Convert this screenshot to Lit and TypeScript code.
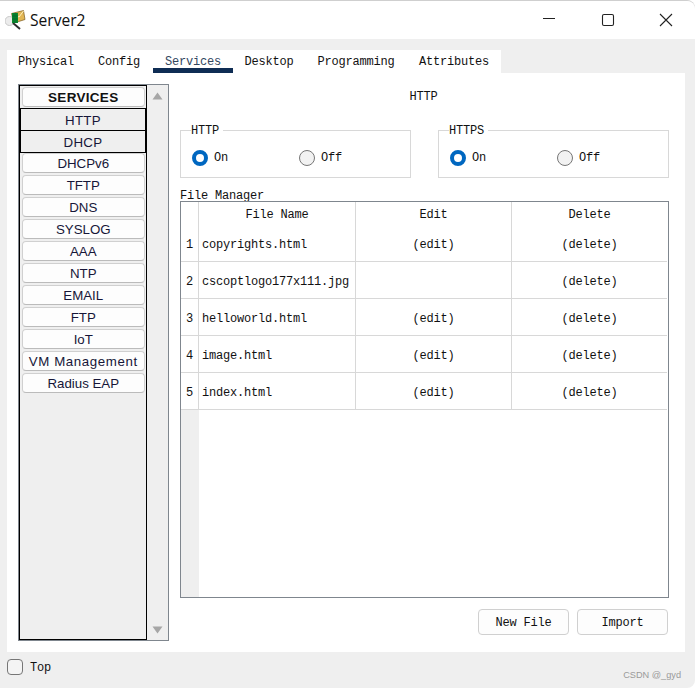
import { LitElement, html, css, svg } from "lit";
import { customElement } from "lit/decorators.js";

const SERVICES = ["DHCPv6","TFTP","DNS","SYSLOG","AAA","NTP","EMAIL","FTP","IoT","VM Management","Radius EAP"];
const TABS = ["Physical","Config","Services","Desktop","Programming","Attributes"];
const FILES = [
  ["copyrights.html", true],
  ["cscoptlogo177x111.jpg", false],
  ["helloworld.html", true],
  ["image.html", true],
  ["index.html", true],
] as const;

const appIcon = svg`<svg class="appicon" width="22" height="22" viewBox="0 0 22 22">
  <circle cx="4.500" cy="12" r="4.500" fill="#ececec" stroke="#c8c8c8"/>
  <path d="M8 14l7 6" stroke="#2c2c2c" stroke-width="2" fill="none"/>
  <path d="M6.500 4.500L18.500 1.500 20 10.500 9 14z" fill="#e2b654" stroke="#7a5a20" stroke-width=".7"/>
  <path d="M8 4.500l6 3.500 4.500-6" fill="none" stroke="#fff2c0"/>
  <rect x="7" y="4" width="6" height="10" fill="#0d8a2c"/>
  <path d="M9 4v10M11 4v10M7 7h6M7 10h6" stroke="#063" stroke-width=".7"/>
</svg>`;

@customElement("app-root")
export class AppRoot extends LitElement {
  static styles = css`
    :host {
      display: block; width: 695px; height: 688px; overflow: hidden; background: #fff;
      font-family: "Liberation Mono", monospace; font-size: 12px; letter-spacing: -0.2px; color: #111;
    }
    .window {
      box-sizing: border-box; width: 695px; height: 688px; display: flex; flex-direction: column;
      background: #efefef; border-top: 1px solid #cfcfcf; border-radius: 0 8px 8px 0;
    }
    .title {
      height: 38px; background: #fff; display: flex; align-items: center; flex: none;
      border-radius: 0 8px 0 0;
    }
    .appicon { margin: 0 3px 0 5px; flex: none; }
    .title-text { font: 15.600px "Open Sans", "Noto Sans", sans-serif; letter-spacing: 0; color: #111; flex: 1; }
    .winbtns { display: flex; align-items: center; }
    .winbtn { width: 59px; height: 38px; display: flex; align-items: center; justify-content: center; }
    .winbtn:last-child { width: 58px; }
    .body { padding: 11px 10px 0 7px; flex: 1; display: flex; flex-direction: column; }
    .tabs { display: flex; width: 494px; height: 23px; background: #fff; flex: none; }
    .tab { position: relative; height: 23px; line-height: 24px; text-align: center; flex: none; }
    .tab.on { color: #33475f; }
    .tab.on::after { content: ""; position: absolute; left: 0; right: 0; bottom: 0; height: 5px; background: #0f2d54; }
    .panel {
      background: #fff; height: 579px; flex: none; box-sizing: border-box; padding: 11px 16px 0 11px;
      display: flex; gap: 11px;
    }
    .listbox {
      width: 151px; height: 557px; flex: none; box-sizing: border-box; border: 1px solid #7f868e;
      display: flex; background: #efefef;
    }
    .list {
      width: 128px; box-sizing: border-box; border: 1px solid #000;
      padding: 1px 0 0; display: flex; flex-direction: column; flex: none;
    }
    .svc {
      box-sizing: border-box; height: 20px; margin: 0 1px 2px 1.500px; background: #fdfdfd; border: 1px solid #d0d0d0; border-radius: 4px;
      border-bottom-color: #bbb;
      font: 13.300px/19px "Liberation Sans", Arial, sans-serif; letter-spacing: 0; text-align: center; color: #161638;
      flex: none;
    }
    .svc.wide { letter-spacing: .6px; }
    .svc.head { font-weight: 700; font-size: 13.500px; letter-spacing: .3px; color: #111; margin-bottom: 1px; }
    .svc.sel {
      height: 23px; margin: 0 0 -1px 0; background: #efefef; border: 1px solid #000; border-radius: 0;
      line-height: 23px; letter-spacing: .3px;
    }
    .svc.sel + .svc:not(.sel) { margin-top: 1px; }
    .scroll { flex: 1; display: flex; flex-direction: column; justify-content: space-between; align-items: center; padding: 7px 1px 6px 0; box-sizing: border-box; }
    .right { flex: 1; min-width: 0; display: flex; flex-direction: column; }
    .heading { height: 24px; line-height: 26px; text-align: center; flex: none; padding-right: 2px; }
    .proto { display: flex; justify-content: space-between; margin-top: 15px; flex: none; height: 55px; }
    fieldset {
      width: 231px; height: 55px; box-sizing: border-box; margin: 0; padding: 0 0 0 11px;
      border: 1px solid #d8d8d8; display: flex;
    }
    legend { padding: 0 4px 0 0; margin-left: -1px; line-height: 16px; height: 14px; background: #fff; }
    .radios { display: flex; margin-top: 12px; }
    .radio { width: 107px; display: flex; align-items: center; gap: 6px; height: 18px; flex: none; }
    .dot { width: 16px; height: 16px; box-sizing: border-box; border-radius: 50%; flex: none; }
    .dot.on { border: 4.500px solid #0067c0; background: #fff; }
    .dot.off { border: 1px solid #767676; background: #f2f2f2; }
    .fm-label { margin-top: 10px; height: 13px; line-height: 16px; flex: none; }
    .table {
      height: 397px; box-sizing: border-box; border: 1px solid #7f868e; flex: none;
      display: grid; grid-template-columns: 17px 157px 156px 156px; grid-auto-rows: 37px;
      grid-template-rows: 23px; align-content: start;
      background: linear-gradient(to right, #efefef 18px, #fff 18px);
    }
    .cell {
      display: flex; align-items: center; justify-content: center; box-sizing: border-box;
      background: #fff; border-bottom: 1px solid #d8d8d8; border-left: 1px solid #d8d8d8; white-space: nowrap;
      padding-top: 3px;
    }
    .cell.num { border-left: none; border-bottom: 1px solid #d8d8d8; justify-content: center; }
    .cell.name { justify-content: flex-start; padding-left: 3px; }
    .cell.hd { border-bottom: none; padding-top: 2px; }
    .actions { display: flex; justify-content: flex-end; gap: 8px; margin-top: 11px; padding-right: 1px; flex: none; }
    .btn {
      width: 91px; height: 26px; box-sizing: border-box; background: #fdfdfd; border: 1px solid #d0d0d0; border-radius: 4px;
      display: flex; align-items: center; justify-content: center; font: inherit; letter-spacing: inherit; color: #111; padding: 2px 0 0;
    }
    .footer { flex: 1; display: flex; align-items: flex-start; position: relative; padding-top: 7px; }
    .check { width: 16px; height: 16px; box-sizing: border-box; border: 1px solid #767676; border-radius: 4px; background: #f4f4f4; flex: none; }
    .top { margin-left: 7px; line-height: 18px; }
    .wm { position: absolute; right: 4px; bottom: 8px; font: 9.200px "Liberation Sans", Arial, sans-serif; letter-spacing: 0; color: #9a9a9a; }
  `;

  render() {
    const tabW = [78, 68, 80, 72, 102, 94];
    return html`
      <div class="window">
        <div class="title">
          ${appIcon}
          <div class="title-text">Server2</div>
          <div class="winbtns">
            <div class="winbtn"><svg width="14" height="14" viewBox="0 0 14 14"><path d="M1 5.500h12" stroke="#222" stroke-width="1"/></svg></div>
            <div class="winbtn"><svg width="14" height="14" viewBox="0 0 14 14"><rect x="1.500" y="1.500" width="11" height="11" rx="1.500" fill="none" stroke="#222" stroke-width="1.100"/></svg></div>
            <div class="winbtn"><svg width="14" height="14" viewBox="0 0 14 14"><path d="M1 1l12 12M13 1L1 13" stroke="#222" stroke-width="1.100"/></svg></div>
          </div>
        </div>
        <div class="body">
          <div class="tabs">
            ${TABS.map((t, i) => html`<div class="tab ${t === "Services" ? "on" : ""}" style="width:${tabW[i]}px">${t}</div>`)}
          </div>
          <div class="panel">
            <div class="listbox">
              <div class="list">
                <div class="svc head">SERVICES</div>
                <div class="svc sel">HTTP</div>
                <div class="svc sel">DHCP</div>
                ${SERVICES.map(s => html`<div class="svc ${s === "VM Management" ? "wide" : ""}">${s}</div>`)}
              </div>
              <div class="scroll">
                <svg width="11" height="8" viewBox="0 0 11 8"><path d="M5.500 0.500L10.500 7.500H0.500z" fill="#a6a6a6"/></svg>
                <svg width="11" height="8" viewBox="0 0 11 8"><path d="M0.500 0.500H10.500L5.500 7.500z" fill="#a6a6a6"/></svg>
              </div>
            </div>
            <div class="right">
              <div class="heading">HTTP</div>
              <div class="proto">
                ${["HTTP", "HTTPS"].map(p => html`
                  <fieldset>
                    <legend>${p}</legend>
                    <div class="radios">
                      <div class="radio"><span class="dot on"></span>On</div>
                      <div class="radio"><span class="dot off"></span>Off</div>
                    </div>
                  </fieldset>`)}
              </div>
              <div class="fm-label">File Manager</div>
              <div class="table">
                <div class="cell num hd"></div>
                <div class="cell hd">File Name</div>
                <div class="cell hd">Edit</div>
                <div class="cell hd">Delete</div>
                ${FILES.map(([f, e], i) => html`
                  <div class="cell num">${i + 1}</div>
                  <div class="cell name">${f}</div>
                  <div class="cell">${e ? "(edit)" : ""}</div>
                  <div class="cell">(delete)</div>`)}
              </div>
              <div class="actions">
                <button class="btn">New File</button>
                <button class="btn">Import</button>
              </div>
            </div>
          </div>
          <div class="footer">
            <span class="check"></span><span class="top">Top</span>
            <span class="wm">CSDN @_gyd</span>
          </div>
        </div>
      </div>`;
  }
}
